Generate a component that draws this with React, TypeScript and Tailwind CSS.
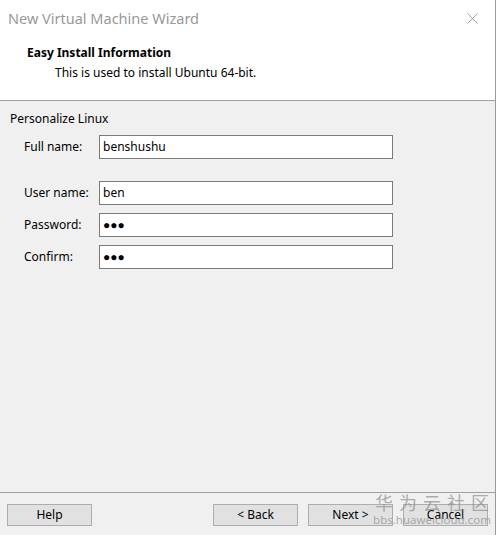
import { X } from 'lucide-react';

const font = { fontFamily: '"Noto Sans", "Liberation Sans", "Noto Sans CJK SC", sans-serif' };

function Field({ label, value, className = '' }: { label: string; value: string; className?: string }) {
  return (
    <div className={`flex items-center ${className}`}>
      <span className="w-[75px] ml-[24px] shrink-0 whitespace-nowrap text-[12px] text-black">{label}</span>
      <div className="w-[294px] h-[24px] bg-white border border-[#7a7a7a] flex items-center px-[3px] text-[12px] text-black">
        {value}
      </div>
    </div>
  );
}

function Btn({ label }: { label: string }) {
  return (
    <button className="w-[85px] h-[22px] bg-[#e1e1e1] border border-[#adadad] text-[12px] text-black">
      {label}
    </button>
  );
}

export default function App() {
  return (
    <div className="w-[499px] h-[535px] bg-white flex" style={font}>
      <div className="w-[496px] h-full flex flex-col border-r border-[#9a9a9a] relative">
        {/* title bar + header */}
        <div className="bg-white h-[101px] border-b border-[#a0a0a0] shrink-0">
          <div className="h-[37px] flex items-center justify-between pl-[8px] pr-[13px]">
            <span className="text-[14.5px] text-[#999999] whitespace-nowrap">New Virtual Machine Wizard</span>
            <X className="w-[19px] h-[19px] text-[#8a8a8a]" strokeWidth={1} />
          </div>
          <div className="pl-[27px] text-[12px] font-bold text-black leading-[16px] mt-[8px]">
            Easy Install Information
          </div>
          <div className="pl-[55px] text-[12px] text-black leading-[16px] mt-[4px]">
            This is used to install Ubuntu 64-bit.
          </div>
        </div>

        {/* body */}
        <div className="flex-1 bg-[#f0f0f0] flex flex-col pt-[10px]">
          <div className="pl-[10px] text-[12px] text-black leading-[16px]">Personalize Linux</div>
          <Field label="Full name:" value="benshushu" className="mt-[8px]" />
          <Field label="User name:" value="ben" className="mt-[22px]" />
          <Field label="Password:" value="●●●" className="mt-[8px]" />
          <Field label="Confirm:" value="●●●" className="mt-[8px]" />
        </div>

        {/* footer */}
        <div className="h-[43px] bg-[#f0f0f0] border-t border-[#a0a0a0] flex items-start pt-[11px] pl-[7px] shrink-0">
          <Btn label="Help" />
          <div className="ml-[121px] flex gap-[10px]">
            <Btn label="< Back" />
            <Btn label="Next >" />
            <Btn label="Cancel" />
          </div>
        </div>

        {/* site watermark */}
        <div className="absolute left-[377px] top-[493px] w-[110px] flex flex-col items-center pointer-events-none text-[#8c8c8c]/70 whitespace-nowrap">
          <span className="text-[18px] tracking-[6px] leading-[20px] pl-[6px]">华为云社区</span>
          <span className="text-[11.5px] leading-[13px]">bbs.huaweicloud.com</span>
        </div>
      </div>
      <div className="flex-1 bg-white" />
    </div>
  );
}
